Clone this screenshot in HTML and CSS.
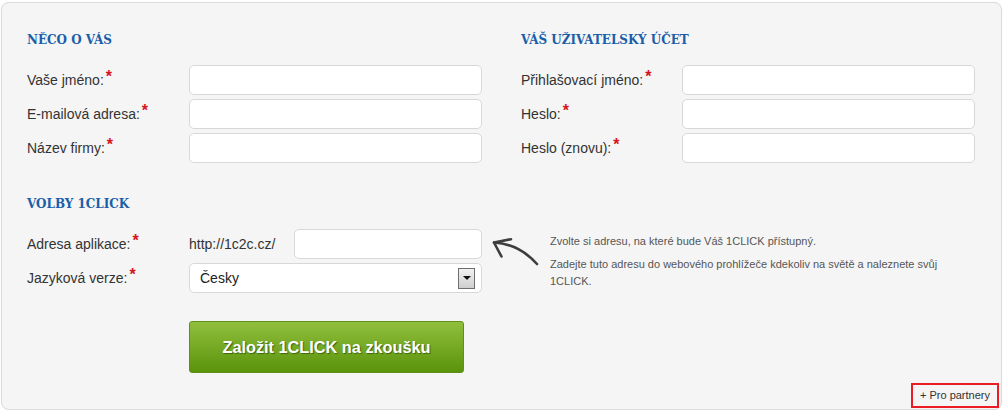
FILE: index.html
```html
<!DOCTYPE html>
<html lang="cs">
<head>
<meta charset="utf-8">
<title>Registrace 1CLICK</title>
<link rel="stylesheet" href="styles.css">
</head>
<body>
<div class="card">
  <div class="cols">
    <section class="col">
      <h2 class="heading">NĚCO O VÁS</h2>
      <div class="rows">
        <div class="row"><label class="label">Vaše jméno:<span class="req">*</span></label><input class="field" type="text"></div>
        <div class="row"><label class="label">E-mailová adresa:<span class="req">*</span></label><input class="field" type="text"></div>
        <div class="row"><label class="label">Název firmy:<span class="req">*</span></label><input class="field" type="text"></div>
      </div>
    </section>
    <section class="col col-right">
      <h2 class="heading">VÁŠ UŽIVATELSKÝ ÚČET</h2>
      <div class="rows">
        <div class="row"><label class="label">Přihlašovací jméno:<span class="req">*</span></label><input class="field" type="text"></div>
        <div class="row"><label class="label">Heslo:<span class="req">*</span></label><input class="field" type="password"></div>
        <div class="row"><label class="label">Heslo (znovu):<span class="req">*</span></label><input class="field" type="password"></div>
      </div>
    </section>
  </div>

  <section class="options">
    <h2 class="heading">VOLBY 1CLICK</h2>
    <div class="options-body">
      <div class="rows options-form">
        <div class="row">
          <label class="label">Adresa aplikace:<span class="req">*</span></label>
          <div class="url-group">
            <span class="url-prefix">http://1c2c.cz/</span>
            <input class="field url-field" type="text">
          </div>
        </div>
        <div class="row">
          <label class="label">Jazyková verze:<span class="req">*</span></label>
          <div class="field select">
            <span class="select-value">Česky</span>
            <span class="select-btn"><span class="tri"></span></span>
          </div>
        </div>
      </div>
      <div class="arrow">
        <svg width="50" height="32" viewBox="0 0 50 32">
          <path d="M4 7.5 Q29 9 47 29" fill="none" stroke="#3d3d3d" stroke-width="2.6" stroke-linecap="round"/>
          <path d="M21 4.2 L4 7.5 L11.5 21.5" fill="none" stroke="#3d3d3d" stroke-width="2.6" stroke-linecap="round" stroke-linejoin="round"/>
        </svg>
      </div>
      <div class="help">
        <p>Zvolte si adresu, na které bude Váš 1CLICK přístupný.</p>
        <p>Zadejte tuto adresu do webového prohlížeče kdekoliv na světě a naleznete svůj 1CLICK.</p>
      </div>
    </div>
    <div class="submit-row">
      <button class="submit" type="button">Založit 1CLICK na zkoušku</button>
    </div>
  </section>

  <div class="footer">
    <a class="partners" href="#">+ Pro partnery</a>
  </div>
</div>
</body>
</html>
```

FILE: styles.css
```css
html, body {
  margin: 0;
  padding: 0;
  background: #ffffff;
}

body {
  font-family: "Liberation Sans", Arial, sans-serif;
  color: #333333;
}

.card {
  box-sizing: border-box;
  width: 1001px;
  margin: 2px 0 0 1px;
  padding: 29px 26px 1px 25px;
  background: #f5f5f5;
  border: 1px solid #dcdcdc;
  border-radius: 8px;
  box-shadow: 0 0 2px rgba(0, 0, 0, 0.06);
}

.cols {
  display: grid;
  grid-template-columns: 455px 1fr;
  column-gap: 39px;
}

.heading {
  margin: 0 0 17px 0;
  font-family: "DejaVu Serif Condensed", "DejaVu Serif", "Liberation Serif", serif;
  font-stretch: condensed;
  font-weight: bold;
  font-size: 13.3px;
  line-height: 16px;
  color: #1a5ea9;
}

.rows {
  display: flex;
  flex-direction: column;
  gap: 4px;
}

.row {
  display: flex;
  align-items: center;
  height: 30px;
  min-width: 0;
}

.label {
  flex: 0 0 162px;
  font-size: 14px;
  line-height: 30px;
  color: #333333;
  white-space: nowrap;
}

.col-right .label {
  flex-basis: 161px;
}

.req {
  color: #d6141b;
  font-weight: bold;
  font-size: 16px;
  margin-left: 2px;
  vertical-align: 3px;
  line-height: 0;
}

.field {
  box-sizing: border-box;
  flex: 1 1 0;
  width: 0;
  min-width: 0;
  height: 30px;
  margin: 0;
  padding: 0 10px;
  background: #ffffff;
  border: 1px solid #d8d8d8;
  border-radius: 5px;
  font-family: "Liberation Sans", Arial, sans-serif;
  font-size: 14px;
  color: #222222;
  outline: none;
}

.options {
  margin-top: 33px;
}

.options-body {
  display: flex;
  align-items: flex-start;
}

.options-form {
  flex: 0 0 455px;
  width: 455px;
  min-width: 0;
}

.url-group {
  flex: 1 1 0;
  min-width: 0;
  display: flex;
  align-items: center;
  height: 30px;
}

.url-prefix {
  flex: 0 0 105px;
  font-size: 14px;
  color: #333333;
}

.select {
  display: flex;
  align-items: center;
  justify-content: space-between;
  padding: 0 6px 0 10px;
}

.select-value {
  font-size: 14px;
  color: #222222;
}

.select-btn {
  box-sizing: border-box;
  width: 17px;
  height: 21px;
  border: 1px solid #6e6e6e;
  background: linear-gradient(#f2f2f2, #cfcfcf);
  display: flex;
  align-items: center;
  justify-content: center;
}

.tri {
  width: 0;
  height: 0;
  border-left: 4px solid transparent;
  border-right: 4px solid transparent;
  border-top: 4px solid #111111;
}

.arrow {
  flex: 0 0 50px;
  margin: 6px 0 0 8px;
  height: 32px;
}

.arrow svg {
  display: block;
}

.help {
  margin: 4px 0 0 10px;
  flex: 0 0 424px;
  font-size: 11px;
  line-height: 17px;
  color: #555555;
}

.help p {
  margin: 0 0 6px 0;
}

.help p:last-child {
  margin-bottom: 0;
}

.submit-row {
  padding-left: 162px;
  margin-top: 28px;
}

.submit {
  box-sizing: border-box;
  width: 275px;
  height: 52px;
  margin: 0;
  padding: 0;
  border: 1px solid #5f8f17;
  border-radius: 3px;
  background: linear-gradient(#90bf3d, #5b930b);
  color: #ffffff;
  font-family: "Liberation Sans", Arial, sans-serif;
  font-weight: bold;
  font-size: 16.3px;
  text-shadow: 1px 1px 1px #3f6410;
  cursor: pointer;
}

.footer {
  display: flex;
  justify-content: flex-end;
  margin: 10px -24px 0 0;
}

.partners {
  box-sizing: border-box;
  height: 25px;
  padding: 0 7px;
  border: 2px solid #ec1c24;
  font-size: 11px;
  line-height: 21px;
  color: #333333;
  text-decoration: none;
}
```
